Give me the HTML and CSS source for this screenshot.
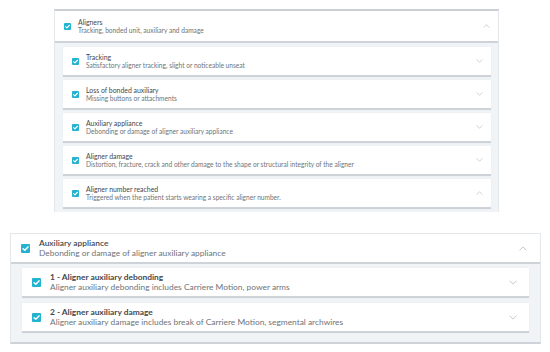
FILE: index.html
```html
<!DOCTYPE html>
<html>
<head>
<meta charset="utf-8">
<link rel="stylesheet" href="styles.css">
</head>
<body>
<div class="page">
  <section class="panel panel-sm">
    <div class="head">
      <span class="cb"><svg viewBox="0 0 10 10"><path d="M2.3 5.2 L4.2 7 L7.8 3.2" /></svg></span>
      <div class="txt"><div class="title">Aligners</div><div class="sub">Tracking, bonded unit, auxiliary and damage</div></div>
      <svg class="chev" viewBox="0 0 10 6"><path d="M1 5 L5 1 L9 5"/></svg>
    </div>
    <div class="body">
      <div class="card">
        <span class="cb"><svg viewBox="0 0 10 10"><path d="M2.3 5.2 L4.2 7 L7.8 3.2" /></svg></span>
        <div class="txt"><div class="title">Tracking</div><div class="sub">Satisfactory aligner tracking, slight or noticeable unseat</div></div>
        <svg class="chev" viewBox="0 0 10 6"><path d="M1 1 L5 5 L9 1"/></svg>
      </div>
      <div class="card">
        <span class="cb"><svg viewBox="0 0 10 10"><path d="M2.3 5.2 L4.2 7 L7.8 3.2" /></svg></span>
        <div class="txt"><div class="title">Loss of bonded auxiliary</div><div class="sub">Missing buttons or attachments</div></div>
        <svg class="chev" viewBox="0 0 10 6"><path d="M1 1 L5 5 L9 1"/></svg>
      </div>
      <div class="card">
        <span class="cb"><svg viewBox="0 0 10 10"><path d="M2.3 5.2 L4.2 7 L7.8 3.2" /></svg></span>
        <div class="txt"><div class="title">Auxiliary appliance</div><div class="sub">Debonding or damage of aligner auxiliary appliance</div></div>
        <svg class="chev" viewBox="0 0 10 6"><path d="M1 1 L5 5 L9 1"/></svg>
      </div>
      <div class="card">
        <span class="cb"><svg viewBox="0 0 10 10"><path d="M2.3 5.2 L4.2 7 L7.8 3.2" /></svg></span>
        <div class="txt"><div class="title">Aligner damage</div><div class="sub">Distortion, fracture, crack and other damage to the shape or structural integrity of the aligner</div></div>
        <svg class="chev" viewBox="0 0 10 6"><path d="M1 1 L5 5 L9 1"/></svg>
      </div>
      <div class="card">
        <span class="cb"><svg viewBox="0 0 10 10"><path d="M2.3 5.2 L4.2 7 L7.8 3.2" /></svg></span>
        <div class="txt"><div class="title">Aligner number reached</div><div class="sub">Triggered when the patient starts wearing a specific aligner number.</div></div>
        <svg class="chev" viewBox="0 0 10 6"><path d="M1 5 L5 1 L9 5"/></svg>
      </div>
    </div>
  </section>

  <section class="panel panel-lg">
    <div class="head">
      <span class="cb"><svg viewBox="0 0 10 10"><path d="M2.3 5.2 L4.2 7 L7.8 3.2" /></svg></span>
      <div class="txt"><div class="title">Auxiliary appliance</div><div class="sub">Debonding or damage of aligner auxiliary appliance</div></div>
      <svg class="chev" viewBox="0 0 10 6"><path d="M1 5 L5 1 L9 5"/></svg>
    </div>
    <div class="body">
      <div class="card">
        <span class="cb"><svg viewBox="0 0 10 10"><path d="M2.3 5.2 L4.2 7 L7.8 3.2" /></svg></span>
        <div class="txt"><div class="title strong">1 - Aligner auxiliary debonding</div><div class="sub">Aligner auxiliary debonding includes Carriere Motion, power arms</div></div>
        <svg class="chev" viewBox="0 0 10 6"><path d="M1 1 L5 5 L9 1"/></svg>
      </div>
      <div class="card">
        <span class="cb"><svg viewBox="0 0 10 10"><path d="M2.3 5.2 L4.2 7 L7.8 3.2" /></svg></span>
        <div class="txt"><div class="title strong">2 - Aligner auxiliary damage</div><div class="sub">Aligner auxiliary damage includes break of Carriere Motion, segmental archwires</div></div>
        <svg class="chev" viewBox="0 0 10 6"><path d="M1 1 L5 5 L9 1"/></svg>
      </div>
    </div>
  </section>
</div>
</body>
</html>
```

FILE: styles.css
```css
* { box-sizing: border-box; }
html, body { margin: 0; padding: 0; background: #fff; }
body { font-family: Lato, "Open Sans", sans-serif; color: #555a5f; }

.page { display: flex; flex-direction: column; height: 352px; overflow: hidden; }

.panel { display: flex; flex-direction: column; background: #fff; }

.head, .card { display: flex; align-items: center; background: #fff; }
.txt { flex: 1; display: flex; flex-direction: column; min-width: 0; }
.title { color: #43484d; font-weight: 400; white-space: nowrap; }
.sub { color: #6e7479; white-space: nowrap; }

.cb { flex: none; display: flex; background: #23b2d0; border-radius: 1px; }
.cb svg { width: 100%; height: 100%; }
.cb path { fill: none; stroke: #fff; stroke-width: 1.6; stroke-linecap: round; stroke-linejoin: round; }

.chev { flex: none; }
.chev path { fill: none; stroke: #c3c8cc; stroke-width: 1.2; stroke-linecap: round; stroke-linejoin: round; }

.body { display: flex; flex-direction: column; background: #f1f4f6; }
.card { border-bottom: 2px solid #cdd3d8; box-shadow: 0 0 1px rgba(0,0,0,0.08); }

/* small (top) panel */
.panel-sm { margin: 9px 0 0 54px; width: 445px; height: 203px; border-top: 2px solid #c9cfd4; border-left: 1px solid #e4e8eb; border-right: 1px solid #e4e8eb; }
.panel-sm .head { height: 32px; padding: 0 8px 0 9px; border-bottom: 2px solid #cdd3d8; }
.panel-sm .cb { width: 7px; height: 7px; margin-right: 7px; }
.panel-sm .title { font-size: 6.9px; line-height: 8.5px; }
.panel-sm .sub { font-size: 6.6px; line-height: 8.5px; }
.panel-sm .chev { width: 7px; height: 4px; }
.panel-sm .body { flex: 1; padding: 4px 7px 0 8px; gap: 3px; }
.panel-sm .card { height: 30px; padding: 0 8px 0 9px; }

/* large (bottom) panel */
.panel-lg { margin: 21px 0 0 10px; width: 531px; border: 1px solid #e4e8eb; border-bottom: 2px solid #cdd3d8; }
.panel-lg .head { height: 30px; padding: 0 13px 0 10px; border-bottom: 2px solid #cdd3d8; }
.panel-lg .cb { width: 9px; height: 9px; margin-right: 9px; }
.panel-lg .title { font-size: 8.4px; line-height: 10px; font-weight: 600; }
.panel-lg .title.strong { font-weight: 700; }
.panel-lg .sub { font-size: 8.4px; line-height: 10px; }
.panel-lg .chev { width: 8px; height: 5px; }
.panel-lg .body { padding: 4px 11px 9px 11px; gap: 5px; }
.panel-lg .card { height: 30px; padding: 0 12px 0 10px; }
```
